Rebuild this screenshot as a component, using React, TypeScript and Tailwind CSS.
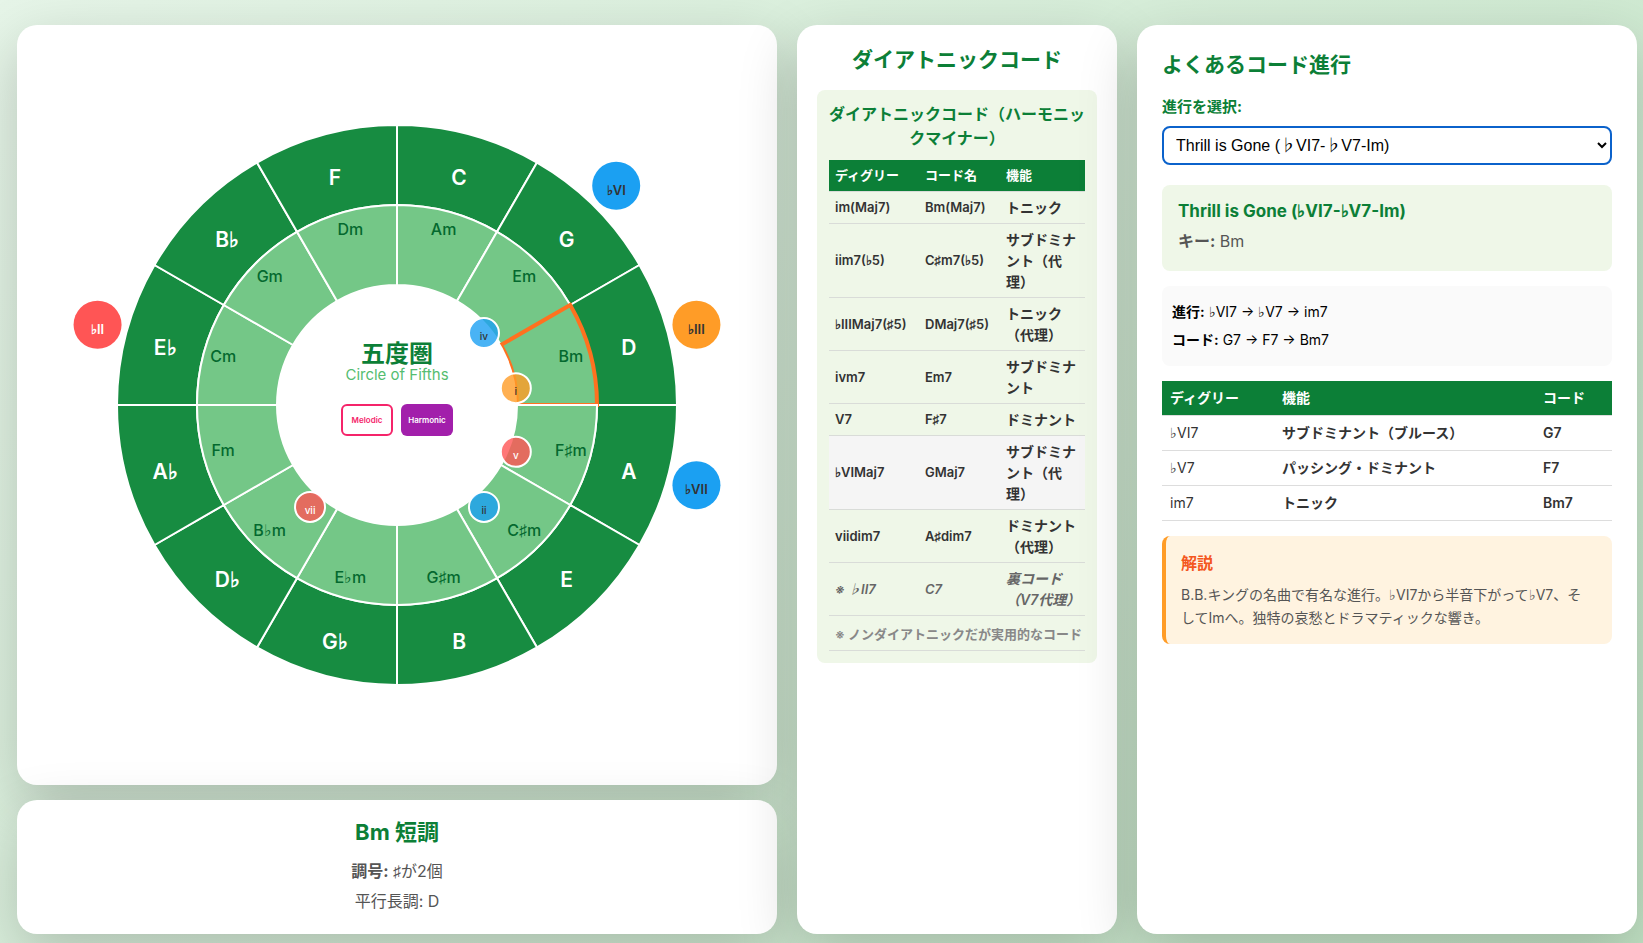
import React, { useState } from "react";

const MAJOR_KEYS = ["C", "G", "D", "A", "E", "B", "G♭", "D♭", "A♭", "E♭", "B♭", "F"];
const MINOR_KEYS = ["Am", "Em", "Bm", "F♯m", "C♯m", "G♯m", "E♭m", "B♭m", "Fm", "Cm", "Gm", "Dm"];

const CENTER = 380;
const R_OUTER = 280;
const R_MIDDLE = 200;
const R_INNER = 120;

const OUTER_BADGES = [
  { label: "♭VI", angle: 45, fill: "#1ba0f2", color: "#333333" },
  { label: "♭III", angle: 75, fill: "#ff9c27", color: "#333333" },
  { label: "♭VII", angle: 105, fill: "#1ba0f2", color: "#333333" },
  { label: "♭II", angle: 285, fill: "#ff5555", color: "#ffffff" },
];

const INNER_BADGES = [
  { label: "iv", angle: 45, fill: "#1ba0f2", color: "#333333" },
  { label: "i", angle: 75, fill: "#ff9c27", color: "#333333" },
  { label: "v", angle: 105, fill: "#ff5555", color: "#ffffff" },
  { label: "ii", angle: 135, fill: "#1ba0f2", color: "#333333" },
  { label: "vii", angle: 225, fill: "#ff5555", color: "#ffffff" },
];

const DIATONIC = [
  { degree: "im(Maj7)", chord: "Bm(Maj7)", role: "トニック" },
  { degree: "iim7(♭5)", chord: "C♯m7(♭5)", role: "サブドミナント（代理）" },
  { degree: "♭IIIMaj7(♯5)", chord: "DMaj7(♯5)", role: "トニック（代理）" },
  { degree: "ivm7", chord: "Em7", role: "サブドミナント" },
  { degree: "V7", chord: "F♯7", role: "ドミナント" },
  { degree: "♭VIMaj7", chord: "GMaj7", role: "サブドミナント（代理）", active: true },
  { degree: "viidim7", chord: "A♯dim7", role: "ドミナント（代理）" },
];

const PROGRESSION = [
  { degree: "♭VI7", role: "サブドミナント（ブルース）", chord: "G7" },
  { degree: "♭V7", role: "パッシング・ドミナント", chord: "F7" },
  { degree: "im7", role: "トニック", chord: "Bm7" },
];

// 0 degrees points straight up, angles go clockwise
function polar(r: number, angle: number) {
  const rad = ((angle - 90) * Math.PI) / 180;
  return { x: CENTER + r * Math.cos(rad), y: CENTER + r * Math.sin(rad) };
}

function sector(r1: number, r2: number, index: number) {
  const a = polar(r1, index * 30);
  const b = polar(r2, index * 30);
  const c = polar(r2, index * 30 + 30);
  const d = polar(r1, index * 30 + 30);
  return `M ${a.x} ${a.y} L ${b.x} ${b.y} A ${r2} ${r2} 0 0 1 ${c.x} ${c.y} L ${d.x} ${d.y} A ${r1} ${r1} 0 0 0 ${a.x} ${a.y} Z`;
}

function Card({ className, children }: { className: string; children: React.ReactNode }) {
  return (
    <section className={`rounded-[20px] bg-white shadow-[0_20px_60px_rgba(0,0,0,0.2)] ${className}`}>
      {children}
    </section>
  );
}

// Chord names skip the CJK font, whose flat and sharp signs are full width
function Chord({ children }: { children: React.ReactNode }) {
  return <span className="font-['Inter',serif]">{children}</span>;
}

function Wheel({ selected }: { selected: number }) {
  return (
    <svg viewBox="0 0 760 760" className="w-full font-['Inter',serif] [grid-area:1/1]" textAnchor="middle">
      {MAJOR_KEYS.map((key, i) => (
        <path key={key} d={sector(R_MIDDLE, R_OUTER, i)} fill="#178c41" stroke="#fff" strokeWidth="2" />
      ))}
      {MINOR_KEYS.map((key, i) => (
        <path
          key={key}
          d={sector(R_INNER, R_MIDDLE, i)}
          fill="#74c787"
          stroke={i === selected ? "#ff711f" : "#fff"}
          strokeWidth={i === selected ? 4 : 2}
        />
      ))}
      <circle cx={CENTER} cy={CENTER} r={R_INNER} fill="#fff" />

      {MAJOR_KEYS.map((key, i) => {
        const p = polar(240, i * 30 + 15);
        return (
          <text key={key} x={p.x} y={p.y + 12} fill="#fff" fontSize="21" fontWeight="600">
            {key}
          </text>
        );
      })}
      {MINOR_KEYS.map((key, i) => {
        const p = polar(180, i * 30 + 15);
        return (
          <text key={key} x={p.x} y={p.y + 4} fill="#04692f" fontSize="16" fontWeight="500">
            {key}
          </text>
        );
      })}

      {OUTER_BADGES.map((b) => {
        const p = polar(310, b.angle);
        return (
          <g key={b.label}>
            <circle cx={p.x} cy={p.y} r="24" fill={b.fill} />
            <text x={p.x} y={p.y + 9} fill={b.color} fontSize="13" fontWeight="600">
              {b.label}
            </text>
          </g>
        );
      })}
      {INNER_BADGES.map((b) => {
        const p = polar(123, b.angle);
        return (
          <g key={b.label}>
            <circle cx={p.x} cy={p.y + 15} r="15" fill={b.fill} fillOpacity="0.8" />
            <circle cx={p.x} cy={p.y + 15} r="15" fill="none" stroke="#fff" strokeWidth="2" />
            <text x={p.x} y={p.y + 22} fill={b.color} fontSize="10" fontWeight="500">
              {b.label}
            </text>
          </g>
        );
      })}
    </svg>
  );
}

export default function App() {
  const [scale, setScale] = useState("harmonic");

  return (
    <main className="grid min-h-screen grid-cols-[minmax(0,1fr)_320px_500px] gap-5 bg-linear-135 from-[#e6f5e8] to-[#c2e3c5] pt-[25px] pr-[6px] pb-[9px] pl-[17px] font-['Inter','Noto_Sans_CJK_JP',sans-serif] [text-spacing-trim:space-all]">
      {/* Circle of fifths */}
      <div className="flex flex-col gap-[15px]">
        <Card className="grid aspect-square place-items-center">
          <Wheel selected={2} />
          <div className="flex flex-col items-center pb-8 [grid-area:1/1]">
            <h1 className="text-2xl leading-6 font-bold text-[#0c7f37]">五度圏</h1>
            <p className="text-[15px] leading-[18px] text-[#55bd70]">Circle of Fifths</p>
            <div className="mt-5 flex gap-2">
              <button
                type="button"
                aria-pressed={scale === "melodic"}
                onClick={() => setScale("melodic")}
                className="h-8 w-[52px] rounded-md border-2 border-[#f5246a] bg-white text-[8px] font-semibold text-[#f5246a]"
              >
                Melodic
              </button>
              <button
                type="button"
                aria-pressed={scale === "harmonic"}
                onClick={() => setScale("harmonic")}
                className="h-8 w-[52px] rounded-md bg-[#a21fab] text-[8px] font-semibold text-white"
              >
                Harmonic
              </button>
            </div>
          </div>
        </Card>
        <Card className="flex-1 px-5 py-4 text-center text-[#555]">
          <h2 className="text-[22px] leading-8 font-bold text-[#0c7f37]">Bm 短調</h2>
          <p className="mt-2 text-base leading-[30px]">
            <strong>調号:</strong> <Chord>♯</Chord>が2個
          </p>
          <p className="text-base leading-[30px]">平行長調: D</p>
        </Card>
      </div>

      {/* Diatonic chords */}
      <Card className="p-5">
        <h2 className="text-center text-[21px] leading-[30px] font-bold text-[#0c7f37]">ダイアトニックコード</h2>
        <div className="mt-[15px] rounded-lg bg-[#eff7e8] p-3">
          <h3 className="mb-[10px] text-center text-base leading-6 font-bold text-[#0c7f37]">
            ダイアトニックコード（ハーモニックマイナー）
          </h3>
          <table className="w-full table-fixed border-collapse text-left text-[13px] leading-[21px] font-semibold text-[#333]">
            <colgroup>
              <col className="w-[90px]" />
              <col className="w-[81px]" />
              <col />
            </colgroup>
            <thead className="bg-[#0c7f37] text-white">
              <tr className="border-b border-[#d9dcd8]">
                <th className="px-[6px] py-[5px]">ディグリー</th>
                <th className="px-[6px] py-[5px]">コード名</th>
                <th className="px-[6px] py-[5px]">機能</th>
              </tr>
            </thead>
            <tbody>
              {DIATONIC.map((row) => (
                <tr key={row.degree} className={`border-b border-[#d9dcd8] ${row.active ? "bg-[#f5f5f5]" : ""}`}>
                  <td className="px-[6px] py-[5px] whitespace-nowrap">
                    <Chord>{row.degree}</Chord>
                  </td>
                  <td className="px-[6px] py-[5px] whitespace-nowrap">
                    <Chord>{row.chord}</Chord>
                  </td>
                  <td className="px-[6px] py-[5px] text-[14px]">{row.role}</td>
                </tr>
              ))}
              <tr className="border-b border-[#d9dcd8] text-[#666] italic">
                <td className="px-[6px] py-[5px]">※ ♭II7</td>
                <td className="px-[6px] py-[5px]">C7</td>
                <td className="py-[5px] pl-[6px] text-[14px]">裏コード（V7代理）</td>
              </tr>
              <tr className="border-b border-[#d9dcd8] text-[#888]">
                <td colSpan={3} className="pt-2 pb-[5px] pl-[6px] whitespace-nowrap">
                  ※ ノンダイアトニックだが実用的なコード
                </td>
              </tr>
            </tbody>
          </table>
        </div>
      </Card>

      {/* Common progressions */}
      <Card className="p-[25px]">
        <h2 className="text-[21px] leading-[30px] font-bold text-[#0c7f37]">よくあるコード進行</h2>
        <label htmlFor="progression" className="mt-[15px] block text-[15px] leading-[23px] font-bold text-[#0c7f37]">
          進行を選択:
        </label>
        <select
          id="progression"
          className="mt-2 block h-[39px] w-full rounded-lg border-2 border-[#0b62cb] bg-white px-2 font-['Liberation_Sans','Noto_Sans_CJK_JP',sans-serif] text-base text-black"
        >
          <option>Thrill is Gone (♭VI7-♭V7-Im)</option>
        </select>

        <div className="mt-5 rounded-lg bg-[#eff7e8] px-4 pt-3 pb-[14px]">
          <h3 className="text-[17px] leading-7 font-bold text-[#0c7f37]">
            <Chord>Thrill is Gone (♭VI7-♭V7-Im)</Chord>
          </h3>
          <p className="text-base leading-8 text-[#555]">
            <strong>キー:</strong> Bm
          </p>
        </div>

        <div className="mt-[15px] rounded-lg bg-[#fafafa] px-[10px] py-3 text-[14px] leading-7 text-black">
          <p>
            <strong>進行:</strong> <Chord>♭VI7 → ♭V7 → im7</Chord>
          </p>
          <p>
            <strong>コード:</strong> <Chord>G7 → F7 → Bm7</Chord>
          </p>
        </div>

        <table className="mt-[15px] w-full table-fixed border-collapse text-left text-[14px] leading-[22px] text-[#333]">
          <colgroup>
            <col className="w-[112px]" />
            <col />
            <col className="w-[77px]" />
          </colgroup>
          <thead className="bg-[#0c7f37] text-white">
            <tr className="border-b border-[#ddd]">
              <th className="px-2 py-[6px]">ディグリー</th>
              <th className="px-2 py-[6px]">機能</th>
              <th className="px-2 py-[6px]">コード</th>
            </tr>
          </thead>
          <tbody>
            {PROGRESSION.map((row) => (
              <tr key={row.degree} className="border-b border-[#ddd]">
                <td className="px-2 py-[6px]">
                  <Chord>{row.degree}</Chord>
                </td>
                <td className="px-2 py-[6px] font-semibold">{row.role}</td>
                <td className="px-2 py-[6px] font-semibold">
                  <Chord>{row.chord}</Chord>
                </td>
              </tr>
            ))}
          </tbody>
        </table>

        <div className="mt-[15px] rounded-lg border-l-4 border-[#ff9c27] bg-[#fff3e0] py-[15px] pr-6 pl-[15px]">
          <h4 className="text-base leading-6 font-bold text-[#f4571e]">解説</h4>
          <p className="mt-2 text-[14px] leading-[23px] text-[#555]">
            B.B.キングの名曲で有名な進行。<Chord>♭VI7</Chord>から半音下がって<Chord>♭V7</Chord>、そしてImへ。独特の哀愁とドラマティックな響き。
          </p>
        </div>
      </Card>
    </main>
  );
}
